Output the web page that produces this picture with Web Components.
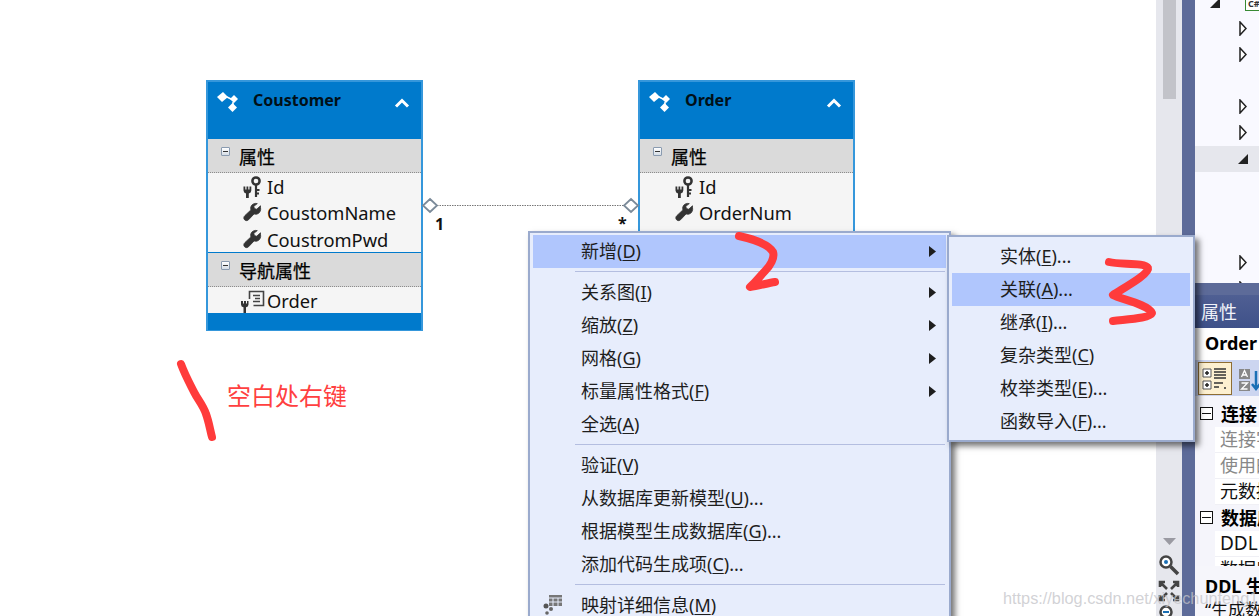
<!DOCTYPE html>
<html lang="zh-CN"><head><meta charset="utf-8"><title>EDMX</title>
<style>
html,body{margin:0;padding:0;background:#fff;overflow:hidden}
body{font-family:"Noto Sans","Noto Sans CJK SC",sans-serif}
</style></head><body>
<x-app>
  <x-canvas slot="canvas">
    <x-entity name="Coustomer" style="left:206px;top:80px;height:251px">
      <x-group label="属性">
        <x-prop kind="key">Id</x-prop><x-prop kind="prop">CoustomName</x-prop><x-prop kind="prop">CoustromPwd</x-prop>
      </x-group>
      <x-group label="导航属性" class="nav">
        <x-prop kind="nav">Order</x-prop>
      </x-group>
    </x-entity>
    <x-entity name="Order" style="left:638px;top:80px;height:300px">
      <x-group label="属性">
        <x-prop kind="key">Id</x-prop><x-prop kind="prop">OrderNum</x-prop><x-prop kind=""></x-prop>
      </x-group>
    </x-entity>
    <x-link></x-link>
    <x-note>空白处右键</x-note>
  </x-canvas>
  <x-scroll slot="scroll"></x-scroll>
  <x-side slot="side"></x-side>
  <x-menu slot="over" style="left:528px;top:231px;width:423px;height:400px">
    <x-item hot arrow>新增(<u>D</u>)</x-item><x-sep></x-sep>
    <x-item arrow>关系图(<u>I</u>)</x-item><x-item arrow>缩放(<u>Z</u>)</x-item><x-item arrow>网格(<u>G</u>)</x-item><x-item arrow>标量属性格式(<u>F</u>)</x-item><x-item>全选(<u>A</u>)</x-item><x-sep></x-sep>
    <x-item>验证(<u>V</u>)</x-item><x-item>从数据库更新模型(<u>U</u>)...</x-item><x-item>根据模型生成数据库(<u>G</u>)...</x-item><x-item>添加代码生成项(<u>C</u>)...</x-item><x-sep></x-sep>
    <x-item icon>映射详细信息(<u>M</u>)</x-item>
  </x-menu>
  <x-menu slot="over" sub style="left:947px;top:235px;width:248px;height:207px">
    <x-item>实体(<u>E</u>)...</x-item><x-item hot>关联(<u>A</u>)...</x-item><x-item>继承(<u>I</u>)...</x-item><x-item>复杂类型(<u>C</u>)</x-item><x-item>枚举类型(<u>E</u>)...</x-item><x-item>函数导入(<u>F</u>)...</x-item>
  </x-menu>
  <x-ink slot="over"></x-ink>
  <x-mark slot="over">https://blog.csdn.net/xiyechunfeng1</x-mark>
</x-app>
<script>
const def=(name,html)=>{
  customElements.define(name,class extends HTMLElement{
    constructor(){super();this.attachShadow({mode:'open'});}
    connectedCallback(){ if(this.shadowRoot.innerHTML)return;
      this.shadowRoot.innerHTML=typeof html==='function'?html(this):html; }
  });
};
const ICONS={
 key:`<svg width="22" height="22" viewBox="0 0 22 22"><circle cx="15" cy="5" r="3.600" fill="none" stroke="#333" stroke-width="2.500"/><path d="M15 8.500V21M15 14h3.500M15 17.500h3" stroke="#333" stroke-width="2.200" fill="none"/><path d="M2.500 10.500v4a3.200 3.200 0 0 0 2.500 3V22h2.800v-4.500a3.200 3.200 0 0 0 2.500-3v-4H8.500v3H7.300v-3H5.500v3H4.300v-3z" fill="#333"/></svg>`,
 prop:`<svg width="22" height="22" viewBox="0 0 22 22"><path d="M19.500 2.800l-3.800 3.400-2.300-.6-.6-2.300L16.300.6c-2.800-.8-5.800.7-6.500 3.400-.2 1-.2 2 .1 2.900L4 12.500c-1.500 1.400-1.500 3-.5 4.200 1.100 1.200 2.800 1.300 4.100 0l5.500-5.800c1 .4 2.100.4 3.100.1 2.700-.8 4-3.900 3.300-6.700z" fill="#333" stroke="#333" stroke-width=".8" transform="translate(0 1)"/></svg>`,
 nav:`<svg width="24" height="24" viewBox="0 0 24 24"><path d="M8.500 9V1.500h14v14h-10" fill="none" stroke="#444" stroke-width="1.600"/><path d="M12 5.500h7M14 8.500h5M12 11.500h7" stroke="#444" stroke-width="1.600"/><path d="M0 11v3.500a3 3 0 0 0 2.500 2.800V23H5v-5.700a3 3 0 0 0 2.500-2.800V11H6v2.500H5V11H3v2.500H2V11z" fill="#333"/></svg>`
};
def('x-app',`<style>
:host{display:block;position:relative;width:1259px;height:616px;overflow:hidden;background:#fff}
.row{display:flex;height:616px}
</style><div class="row"><slot name="canvas"></slot><slot name="scroll"></slot><slot name="side"></slot></div><slot name="over"></slot>`);
def('x-canvas',`<style>:host{display:block;position:relative;flex:0 0 1156px;height:616px;background:#fff;overflow:hidden}</style><slot></slot>`);
def('x-entity',t=>`<style>
:host{display:block;position:absolute;width:217px;box-sizing:border-box;background:#007acc;border:2px solid #3597db;border-bottom-width:1px;border-top-width:2px}
.h{height:57px;position:relative;display:flex;align-items:flex-start;box-sizing:border-box;padding:6px 0 0 45px;font:700 16px/24px "Noto Sans",sans-serif;color:#001018}
svg.i{position:absolute;left:7px;top:7px}
svg.c{position:absolute;right:11px;top:16px}
</style><div class="h"><svg class="i" width="26" height="26" viewBox="0 0 26 26"><path d="M12 8l6 3M18 13v3" stroke="#fff" stroke-width="1.500" fill="none"/><path d="M2 8l6-5 5 5-6 5z" fill="#fff"/><path d="M15 10l4-4 4 4-4 4z" fill="#fff"/><path d="M13 18.500l4.500-4.500 4.500 4.500-4.500 4.500z" fill="#fff"/></svg><span>${t.getAttribute('name')}</span><svg class="c" width="16" height="10" viewBox="0 0 16 10"><path d="M2 8.500L8 2.500l6 6" fill="none" stroke="#fff" stroke-width="3"/></svg></div><slot></slot>`);
def('x-group',t=>`<style>
:host{display:block}
:host(.nav){border-top:1px solid #007acc}
.g{height:34px;box-sizing:border-box;background:#dadada;border-bottom:1px dotted #8c8c8c;position:relative;padding-left:31px;font:400 18px/34px "Noto Sans CJK SC",sans-serif;color:#000;-webkit-text-stroke:.25px #000}
.b{position:absolute;left:13px;top:8px;width:9px;height:9px;box-sizing:border-box;border:1px solid #8a9bb0;background:linear-gradient(#fff,#d5dde6);border-radius:1px}
.b:after{content:"";position:absolute;left:1px;right:1px;top:3px;height:1px;background:#333}
.r{background:#f5f5f5}
</style><div class="g"><span class="b"></span>${t.getAttribute('label')}</div><div class="r"><slot></slot></div>`);
def('x-prop',t=>`<style>
:host{display:block;height:26.300px;position:relative;padding-left:59px;font:400 18.300px/27px "Noto Sans",sans-serif;color:#111}
.ic{position:absolute;left:33px;top:3px;width:24px;height:24px}
</style><span class="ic">${ICONS[t.getAttribute('kind')]||''}</span><slot></slot>`);
def('x-link',`<style>
:host{display:block;position:absolute;left:420px;top:194px;width:220px;height:42px}
svg{display:block}
span{position:absolute;font:700 16px/18px "Noto Sans",sans-serif;color:#111}
</style><svg width="220" height="24" viewBox="0 0 220 24"><path d="M17 11.500H204" stroke="#777" stroke-dasharray="1.500 1" fill="none"/><path d="M10 5l7 6.500-7 6.500-7-6.500z M211 5l7 6.500-7 6.500-7-6.500z" fill="#fff" stroke="#7b8a99" stroke-width="1.800"/></svg><span style="left:15px;top:21px">1</span><span style="left:198px;top:20px">*</span>`);
def('x-note',`<style>:host{display:block;position:absolute;left:227px;top:377px;font:400 24px/35px "Noto Sans CJK SC",sans-serif;color:#ff4040;white-space:nowrap}</style><slot></slot>`);
def('x-scroll',`<style>
:host{display:flex;flex-direction:column;align-items:center;flex:0 0 26px;height:616px;background:#e6e7ed;overflow:hidden}
.t{width:13px;height:99px;background:#c2c3c9;flex:none}
svg{flex:none;display:block}
</style><div class="t"></div>
<svg style="margin-top:439px" width="13" height="7" viewBox="0 0 13 7"><path d="M0 0h13L6.500 7z" fill="#9a9aa2"/></svg>
<svg style="margin-top:9px" width="22" height="22" viewBox="0 0 22 22"><circle cx="8" cy="8" r="5.500" fill="#fff" stroke="#444" stroke-width="2.500"/><circle cx="8" cy="8" r="2" fill="#1b6fb5"/><path d="M12.500 12.500L20 20" stroke="#444" stroke-width="3.500"/></svg>
<svg style="margin-top:4px" width="22" height="22" viewBox="0 0 22 22"><path d="M2 7V2h5M15 2h5v5M20 15v5h-5M7 20H2v-5M3 3l6 6M19 3l-6 6M3 19l6-6M19 19l-6-6" fill="none" stroke="#444" stroke-width="2.600"/></svg>
<svg style="margin-top:2px" width="22" height="22" viewBox="0 0 22 22"><circle cx="8" cy="8" r="5.500" fill="#fff" stroke="#444" stroke-width="2.500"/><path d="M5 8h6" stroke="#1b6fb5" stroke-width="2"/></svg>`);
const OPEN='<div class="tr"><svg width="8" height="15" viewBox="0 0 8 15" style="top:5px"><path d="M1 1l6 6.500-6 6.500z" fill="#fff" stroke="#222" stroke-width="1.500"/></svg></div>';
def('x-side',`<style>
:host{display:flex;flex:0 0 77px;height:616px;background:#5d6b99;position:relative}
.p{margin-left:13px;flex:1;display:flex;flex-direction:column;min-width:0;overflow:hidden}
.tree{height:293px;flex:none;background:#f9f9ff;overflow:hidden;display:flex;flex-direction:column;margin-top:-10px;}
.tr{height:26px;flex:none;position:relative}
.tr svg{position:absolute;left:44px;top:8px}
.hl{background:#e6e7ed}
.cs{position:absolute;left:50px;top:6px;width:16px;height:15px;box-sizing:border-box;border:1px solid #388a34;background:#fff;font:700 9px/13px "Noto Sans",sans-serif;color:#333;padding-left:2px;overflow:hidden;white-space:nowrap}
.gap{height:12px;flex:none;background:#5d6b99}
.ti{height:33px;flex:none;background:linear-gradient(#4f5f93,#3f5189);color:#f1f3fa;font:400 18px/33px "Noto Sans CJK SC",sans-serif;padding-left:6px}
.nm{height:32px;flex:none;background:#fff;font:700 18px/30px "Noto Sans","Noto Sans CJK SC",sans-serif;padding-left:10px;color:#000;white-space:nowrap}
.tb{height:36px;flex:none;background:#ccd5f0;display:flex;gap:6px;padding:2px 0 0 3px;box-sizing:border-box}
.btn{width:34px;height:33px;box-sizing:border-box;border:1px solid #8e6d33;background:#fdf0d0;display:flex;align-items:center;justify-content:center}
.az{padding-top:6px}
.grid{height:170px;flex:none;box-sizing:border-box;padding-top:5px;background:#f5f5fb;overflow:hidden;white-space:nowrap}
.row{height:26px;box-sizing:border-box;position:relative;font:400 18px/25px "Noto Sans","Noto Sans CJK SC",sans-serif;color:#111}
.row.c{font-weight:700;padding-left:26px;color:#000;font-family:"Noto Sans CJK SC",sans-serif}
.row.c:before{content:"";position:absolute;left:5px;top:6px;width:13px;height:13px;box-sizing:border-box;border:1px solid #111;background:linear-gradient(#111,#111) center/9px 1px no-repeat #fff}
.row.v{margin-left:20px;padding-left:5px;background:#fff;border-bottom:1px solid #f0f0f5}
.g{color:#888}
.d{flex:1;background:#f6f6fb;padding:8px 0 0 10px;white-space:nowrap;font:400 17px/24px "Noto Sans","Noto Sans CJK SC",sans-serif;color:#111}
.d b{display:block;font-size:18px;line-height:24px;color:#000}
</style><div class="p">
<div class="tree">
<div class="tr"><svg style="left:15px;top:8px" width="10" height="10" viewBox="0 0 10 10"><path d="M0 10h10V0z" fill="#222"/></svg><span class="cs">C#</span></div>
${OPEN}${OPEN}
<div class="tr"></div>
${OPEN}${OPEN}
<div class="tr hl"><svg style="left:43px" width="10" height="10" viewBox="0 0 10 10"><path d="M0 10h10V0z" fill="#222"/></svg></div>
<div class="tr"></div><div class="tr"></div><div class="tr"></div>
${OPEN}${OPEN}
</div>
<div class="gap"></div>
<div class="ti">属性</div>
<div class="nm">Order</div>
<div class="tb"><div class="btn"><svg width="26" height="24" viewBox="0 0 26 24"><path d="M1 2h8v8H1zM1 14h8v8H1z" fill="#fff" stroke="#555"/><path d="M3 6h4M5 4v4M3 18h4M5 16v4" stroke="#222" stroke-width="1.500"/><path d="M12 2h12M12 5h12M12 8h12M12 11h12M12 16h9M12 20h5M22 21h2" stroke="#333" stroke-width="1.600"/></svg></div><div class="az"><svg width="24" height="24" viewBox="0 0 24 24"><rect x="1" y="1" width="11" height="10" fill="#888"/><rect x="1" y="13" width="11" height="10" fill="#888"/><path d="M3.500 9l3-6.500 3 6.500M4.500 7h4M3.500 15h6l-6 6h6" stroke="#fff" stroke-width="1.300" fill="none"/><path d="M18 3v18M14 16l4 5 4-5" stroke="#1b6fb5" stroke-width="2.500" fill="none"/></svg></div></div>
<div class="grid">
<div class="row c">连接</div>
<div class="row v g">连接字符串</div>
<div class="row v g">使用的连接</div>
<div class="row v">元数据工件处理</div>
<div class="row c">数据库架构</div>
<div class="row v" style="font-size:19px">DDL 生成模板</div>
<div class="row v">数据库生成</div>
</div>
<div class="d"><b>DDL 生成模板</b>“生成数据库向导”</div>
</div>`);
def('x-menu',`<style>
:host{display:block;position:absolute;box-sizing:border-box;background:#e7edfc;border:2px solid #9aaacd;padding:2px 3px;box-shadow:4px 4px 6px rgba(0,0,0,.55)}
:host([sub]){padding-top:3px}
</style><slot></slot>`);
def('x-item',t=>`<style>
:host{display:block;height:33px;position:relative;padding-left:48px;font:400 18px/33px "Noto Sans","Noto Sans CJK SC",sans-serif;color:#1e1e1e;white-space:nowrap}
:host([hot]){background:#b0c6fd}
.a{position:absolute;right:10px;top:11px}
.i{position:absolute;left:8px;top:3px}
::slotted(u){text-underline-offset:2px}
</style>${t.hasAttribute('icon')?`<svg class="i" width="22" height="24" viewBox="0 0 22 24"><path d="M8 3h13v11H8z" fill="#777"/><path d="M8 6h13M12 6v8M17 6v8M8 10h13" stroke="#e7edfc"/><circle cx="5" cy="14" r="2.500" fill="#555"/><circle cx="10" cy="17" r="2" fill="#666"/><circle cx="6" cy="21" r="1.800" fill="#666"/></svg>`:''}<slot></slot>${t.hasAttribute('arrow')?`<svg class="a" width="7" height="11" viewBox="0 0 7 11"><path d="M0 0l7 5.500L0 11z" fill="#1e1e1e"/></svg>`:''}`);
def('x-sep',`<style>:host{display:block;height:8px;position:relative}
:host:after{content:"";position:absolute;left:42px;right:1px;top:3px;height:1px;background:#b4bee0}</style>`);
def('x-ink',`<style>:host{display:block;position:absolute;left:0;top:0;width:1259px;height:616px;pointer-events:none}</style>
<svg width="1259" height="616" viewBox="0 0 1259 616" fill="none" stroke="#ff3b3b" stroke-width="8" stroke-linecap="round" stroke-linejoin="round">
<path d="M739 236C748 238 768 243 773 252C775 258 770 266 765 271C760 276 757 281 750 287C758 286 768 283 775 282"/>
<path d="M1109 262C1120 265 1145 262 1148 268C1150 274 1120 290 1113 295C1120 299 1148 304 1152 313C1150 318 1130 319 1113 321"/>
<path d="M181 364C185 375 190 384 194 392C198 400 203 405 206 414C209 422 210 430 212 437"/>
</svg>`);
def('x-mark',`<style>:host{display:block;position:absolute;left:1003px;top:588px;font:400 16.300px/20px "Liberation Sans",sans-serif;color:rgba(195,195,200,.75);white-space:nowrap;pointer-events:none}</style><slot></slot>`);
</script>
</body></html>
